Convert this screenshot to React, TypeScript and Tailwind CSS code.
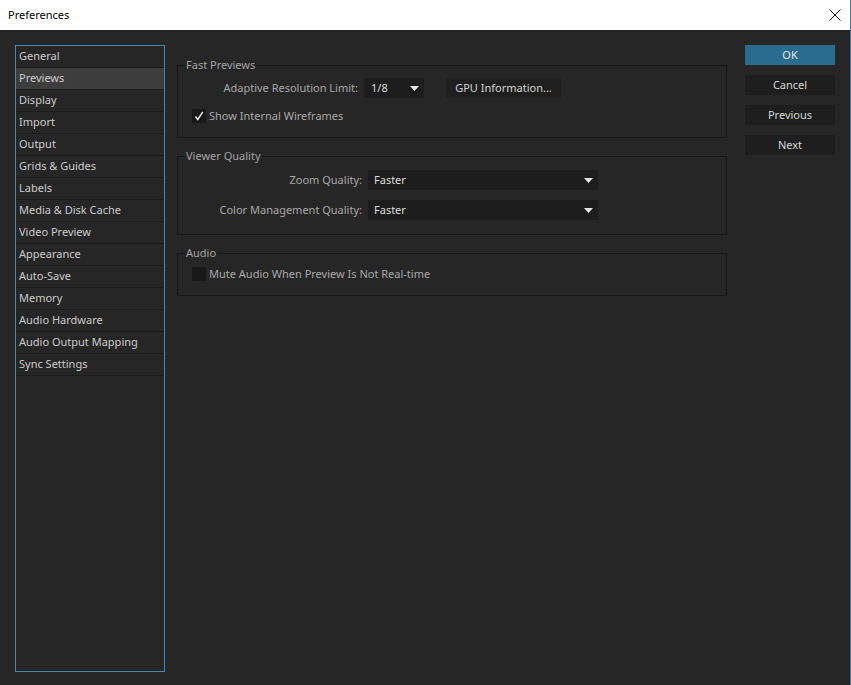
import React from "react";

const font = { fontFamily: '"Noto Sans", "Open Sans", Arial, sans-serif' };

const items = [
  "General",
  "Previews",
  "Display",
  "Import",
  "Output",
  "Grids & Guides",
  "Labels",
  "Media & Disk Cache",
  "Video Preview",
  "Appearance",
  "Auto-Save",
  "Memory",
  "Audio Hardware",
  "Audio Output Mapping",
  "Sync Settings",
];

function Arrow() {
  return (
    <svg width="9" height="5" viewBox="0 0 9 5" className="shrink-0">
      <path d="M0 0 L9 0 L4.5 5 Z" fill="#e6e6e6" />
    </svg>
  );
}

function Check() {
  return (
    <svg width="14" height="14" viewBox="0 0 14 14">
      <path d="M3.5 7.5 L5.8 10.5 L10.8 2.8" stroke="#f2f2f2" strokeWidth="1.4" fill="none" />
    </svg>
  );
}

function Group({ title, children, className }: { title: string; children: React.ReactNode; className?: string }) {
  return (
    <fieldset className={"border border-[#181818] mx-0 " + (className || "")}>
      <legend className="ml-[7px] px-[1px] text-[11px] leading-[14px] text-[#a3a3a3]">{title}</legend>
      {children}
    </fieldset>
  );
}

export default function App() {
  return (
    <div style={font} className="w-[851px] h-[685px] flex flex-col border-r border-[#2f7bb5] overflow-hidden">
      <div className="h-[30px] bg-white flex items-center justify-between shrink-0">
        <span className="pl-[8px] text-[11px] text-black">Preferences</span>
        <svg width="12" height="12" viewBox="0 0 12 12" className="mr-[9px]">
          <path d="M0.5 0.5 L11.5 11.5 M11.5 0.5 L0.5 11.5" stroke="#111" strokeWidth="1" />
        </svg>
      </div>
      <div className="flex-1 bg-[#262626] flex pt-[15px] pl-[15px]">
        <div className="w-[150px] h-[627px] border border-[#4589b0] flex flex-col">
          {items.map((it) => (
            <div
              key={it}
              className={
                "h-[22px] shrink-0 border-b border-[#1c1c1c] flex items-center pl-[3px] text-[11px] text-[#cbcbcb] " +
                (it === "Previews" ? "bg-[#3d3d3d]" : "")
              }
            >
              {it}
            </div>
          ))}
        </div>

        <div className="ml-[12px] w-[550px] mt-[13px] flex flex-col">
          <Group title="Fast Previews" className="pt-[6px] pb-[14px]">
            <div className="flex items-center h-[20px]">
              <div className="w-[180px] text-right text-[11px] text-[#a8a8a8]">Adaptive Resolution Limit:</div>
              <div className="ml-[6px] w-[60px] h-[20px] bg-[#1d1d1d] flex items-center justify-between pl-[7px] pr-[5px]">
                <span className="text-[11px] text-[#dcdcdc]">1/8</span>
                <Arrow />
              </div>
              <div className="ml-[22px] w-[115px] h-[20px] bg-[#1f1f1f] flex items-center justify-center text-[11px] text-[#d2d2d2]">
                GPU Information...
              </div>
            </div>
            <div className="flex items-center mt-[11px] pl-[14px] h-[14px]">
              <div className="w-[14px] h-[14px] bg-[#191919]">
                <Check />
              </div>
              <span className="ml-[3px] text-[11px] leading-[14px] text-[#a8a8a8]">Show Internal Wireframes</span>
            </div>
          </Group>

          <Group title="Viewer Quality" className="mt-[11px] pt-[7px] pb-[14px]">
            <div className="flex items-center h-[20px]">
              <div className="w-[184px] text-right text-[11px] text-[#a8a8a8]">Zoom Quality:</div>
              <div className="ml-[6px] w-[230px] h-[20px] bg-[#1d1d1d] flex items-center justify-between pl-[6px] pr-[5px]">
                <span className="text-[11px] text-[#dcdcdc]">Faster</span>
                <Arrow />
              </div>
            </div>
            <div className="flex items-center h-[20px] mt-[10px]">
              <div className="w-[184px] text-right text-[11px] text-[#a8a8a8]">Color Management Quality:</div>
              <div className="ml-[6px] w-[230px] h-[20px] bg-[#1d1d1d] flex items-center justify-between pl-[6px] pr-[5px]">
                <span className="text-[11px] text-[#dcdcdc]">Faster</span>
                <Arrow />
              </div>
            </div>
          </Group>

          <Group title="Audio" className="mt-[11px] pt-[7px] pb-[14px]">
            <div className="flex items-center pl-[14px] h-[14px]">
              <div className="w-[14px] h-[14px] bg-[#191919]" />
              <span className="ml-[3px] text-[11px] leading-[14px] text-[#a8a8a8]">Mute Audio When Preview Is Not Real-time</span>
            </div>
          </Group>
        </div>

        <div className="ml-[18px] w-[90px] flex flex-col gap-[10px]">
          <div className="h-[20px] bg-[#2a6c8d] flex items-center justify-center text-[11px] text-[#e4e4e4]">OK</div>
          <div className="h-[20px] bg-[#1e1e1e] flex items-center justify-center text-[11px] text-[#d6d6d6]">Cancel</div>
          <div className="h-[20px] bg-[#1e1e1e] flex items-center justify-center text-[11px] text-[#d6d6d6]">Previous</div>
          <div className="h-[20px] bg-[#1e1e1e] flex items-center justify-center text-[11px] text-[#d6d6d6]">Next</div>
        </div>
      </div>
    </div>
  );
}
